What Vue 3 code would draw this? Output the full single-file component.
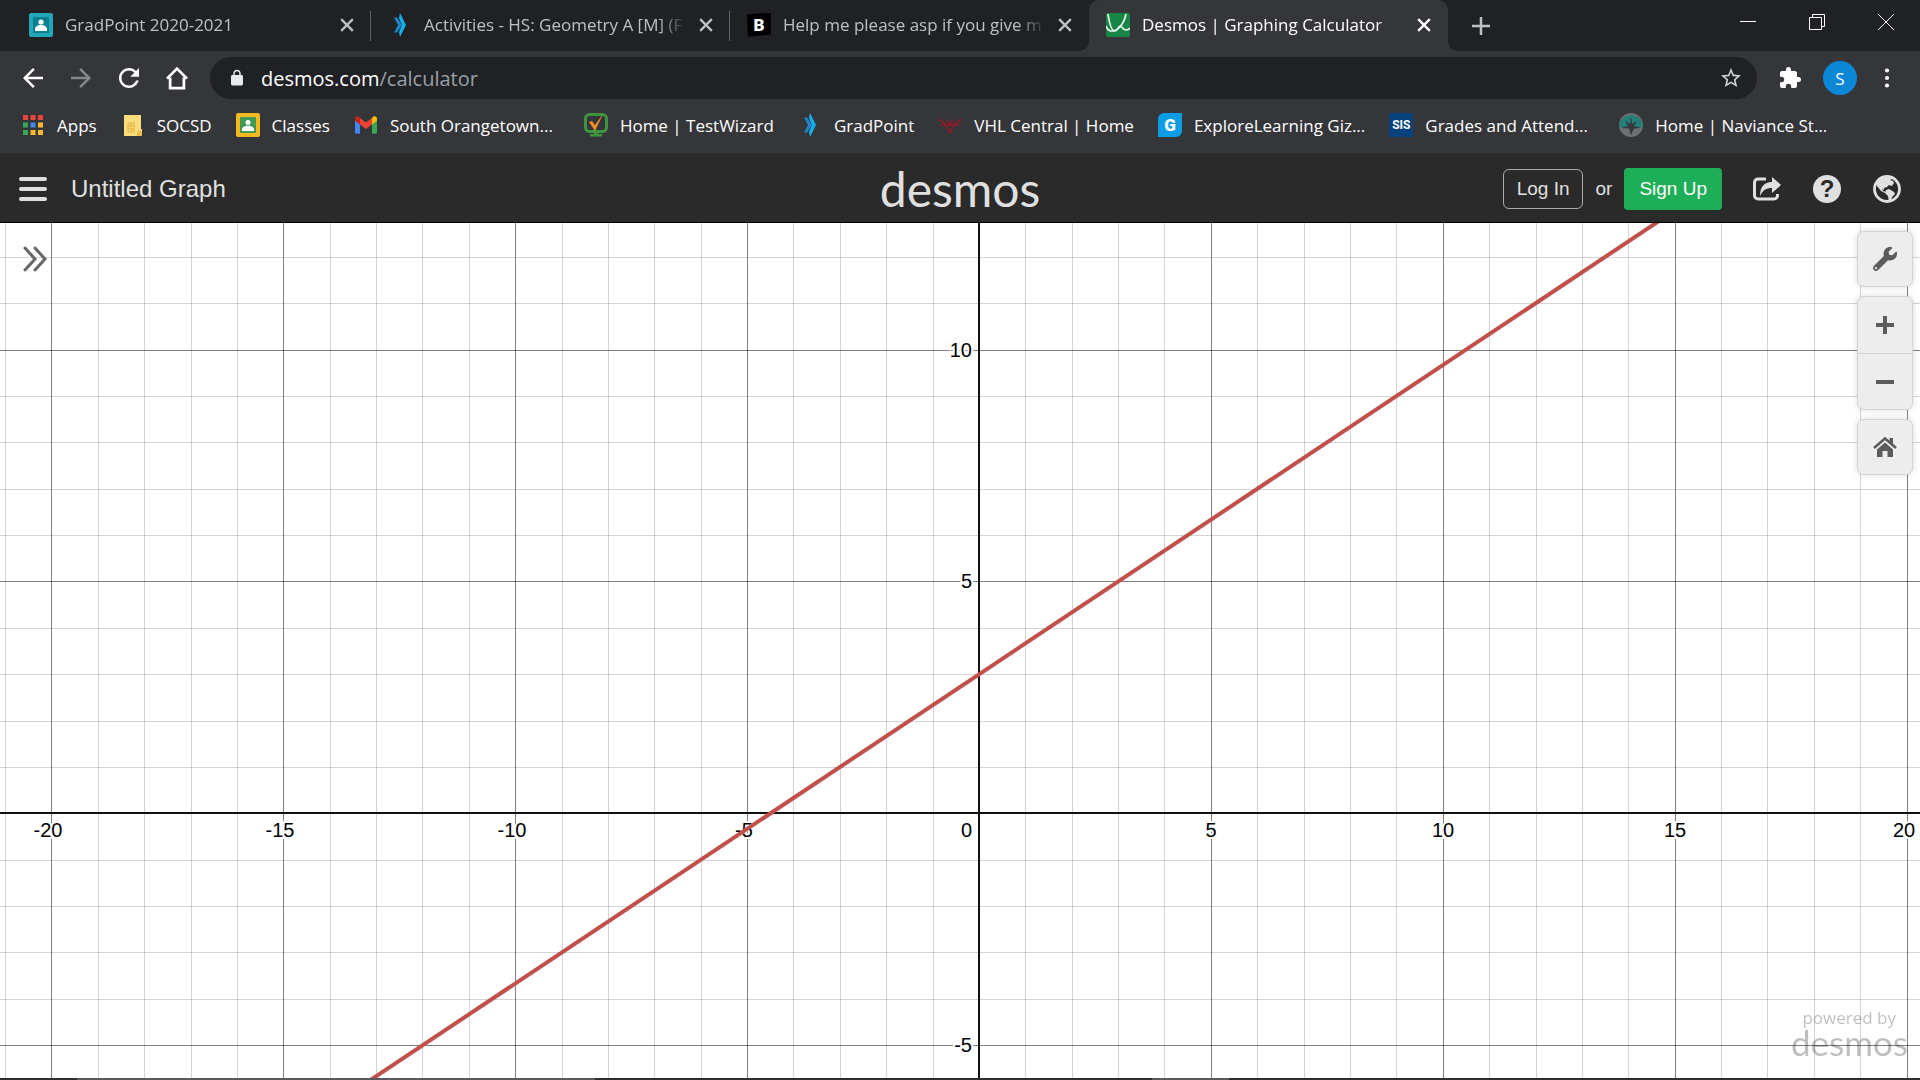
<template>
  <div class="browser">
    <!-- Shared icon shapes -->
    <svg class="sprite" aria-hidden="true">
      <symbol id="classroom-teal" viewBox="0 0 24 24">
        <rect width="24" height="24" rx="2" fill="#22a7b8" />
        <rect x="4" y="4" width="16" height="16" fill="#0b7f8e" />
        <circle cx="12" cy="9" r="2.6" fill="#fff" />
        <path d="M6 18v-2c0-2.500 3-4 6-4s6 1.500 6 4v2z" fill="#fff" />
      </symbol>
      <symbol id="classroom" viewBox="0 0 24 24">
        <rect width="24" height="24" rx="2" fill="#f4b81f" />
        <rect x="4" y="4" width="16" height="16" fill="#3f9b56" />
        <circle cx="12" cy="9.500" r="2.500" fill="#fff" />
        <path d="M6 18v-1.500c0-2.200 3-3.700 6-3.700s6 1.500 6 3.700V18z" fill="#fff" />
      </symbol>
      <symbol id="gradpoint" viewBox="0 0 24 24">
        <path d="M6 4.500h3l5 7.500-5 7.500H6l4-7.500z" fill="#1d86c8" />
        <path d="M12 0l6 12-6 12-1-5 3-7-3-7z" fill="#12b0ee" />
      </symbol>
      <symbol id="desmos" viewBox="0 0 24 24">
        <rect width="24" height="24" rx="2" fill="#168545" />
        <path d="M2 1c1 7 3 17 7 17 3 0 3-5 5-5s3 4 6 4c1.500 0 3-1 4-2M0 13c1 3 3 5 6 5 6 0 12-7 14-17" fill="none" stroke="#e9f7ed" stroke-width="1.700" />
      </symbol>
      <symbol id="apps" viewBox="0 0 24 24">
        <rect x="2" y="2" width="5" height="5" fill="#e8453c" />
        <rect x="9.500" y="2" width="5" height="5" fill="#e8453c" />
        <rect x="17" y="2" width="5" height="5" fill="#e8453c" />
        <rect x="2" y="9.500" width="5" height="5" fill="#3aa757" />
        <rect x="9.500" y="9.500" width="5" height="5" fill="#4688f1" />
        <rect x="17" y="9.500" width="5" height="5" fill="#f9bb2d" />
        <rect x="2" y="17" width="5" height="5" fill="#3aa757" />
        <rect x="9.500" y="17" width="5" height="5" fill="#f9bb2d" />
        <rect x="17" y="17" width="5" height="5" fill="#f9bb2d" />
      </symbol>
      <symbol id="folder" viewBox="0 0 24 24">
        <path d="M3 2h17v14h1v7H3z" fill="#fbdc7c" />
        <path d="M7 10h6v9H7zM10 10v9M7 13h6M7 16h6" fill="none" stroke="#dfb544" />
        <path d="M16 23v-4l2-2 3 2v4z" fill="#e8bd4d" />
      </symbol>
      <symbol id="gmail" viewBox="0 0 24 24">
        <path d="M1 6v13c0 1 .7 1.800 1.700 1.800H6V9z" fill="#4285f4" />
        <path d="M18 9v11.800h3.300c1 0 1.700-.8 1.700-1.800V6z" fill="#34a853" />
        <path d="M18 5v6.500l5-3.800V6c0-2.500-2.500-3.500-4.300-2z" fill="#fbbc04" />
        <path d="M6 11.500V5l6 4.500L18 5v6.500L12 16z" fill="#ea4335" />
        <path d="M1 6v1.700l5 3.800V5L5.300 4C3.500 2.500 1 3.500 1 6z" fill="#c5221f" />
      </symbol>
      <symbol id="testwizard" viewBox="0 0 24 24">
        <rect x="1.500" y="1.500" width="21" height="17" rx="4" fill="none" stroke="#3f9440" stroke-width="3" />
        <path d="M10 18h4v3h4v2.500H6V21h4z" fill="#3f9440" />
        <path d="M5 9l6 9L19 1l-8 11-3-4z" fill="#f28c28" />
      </symbol>
      <symbol id="vhl" viewBox="0 0 24 24">
        <path d="M1 6l7 6 4 8 4-8 7-6M1 12h22M9 7l3 5 3-5M8 12l4 8 4-8" fill="none" stroke="#a51725" stroke-width="1.200" />
      </symbol>
      <symbol id="naviance" viewBox="0 0 24 24">
        <circle cx="12" cy="12" r="12" fill="#6c7073" />
        <path d="M0 14a12 12 0 1 1 24 0c-3 1-5 1-8 0l-4-1-4 1c-3 1-5 1-8 0z" fill="#267e78" />
        <path d="M12 3l1 8 5-3-3 5 7 2-7 .5L12 22l-2-6.500L2 15l7-2-3-5 5 3z" fill="#34383b" />
      </symbol>
      <symbol id="back" viewBox="0 0 24 24">
        <path d="M20 11H7.830l5.590-5.590L12 4l-8 8 8 8 1.410-1.410L7.830 13H20z" fill="currentColor" />
      </symbol>
      <symbol id="forward" viewBox="0 0 24 24">
        <path d="M4 11h12.170l-5.590-5.590L12 4l8 8-8 8-1.410-1.410L16.170 13H4z" fill="currentColor" />
      </symbol>
      <symbol id="reload" viewBox="0 0 24 24">
        <path d="M17.650 6.350C16.200 4.900 14.210 4 12 4c-4.420 0-7.990 3.580-7.990 8s3.570 8 7.990 8c3.730 0 6.840-2.550 7.730-6h-2.080c-.82 2.330-3.040 4-5.650 4-3.310 0-6-2.690-6-6s2.690-6 6-6c1.660 0 3.140.69 4.220 1.780L13 11h7V4l-2.350 2.350z" fill="currentColor" />
      </symbol>
      <symbol id="house" viewBox="0 0 24 24">
        <path d="M4 12.500L12 4.500l8 8M6.500 11.500V20h11v-8.500" fill="none" stroke="currentColor" stroke-width="2.200" />
      </symbol>
      <symbol id="lock" viewBox="0 0 24 24">
        <path d="M18 8h-1V6c0-2.760-2.240-5-5-5S7 3.240 7 6v2H6c-1.100 0-2 .9-2 2v10c0 1.100.9 2 2 2h12c1.100 0 2-.9 2-2V10c0-1.100-.9-2-2-2zM9 6c0-1.660 1.340-3 3-3s3 1.340 3 3v2H9z" fill="currentColor" />
      </symbol>
      <symbol id="star" viewBox="0 0 24 24">
        <path d="M22 9.240l-7.190-.62L12 2 9.190 8.630 2 9.240l5.460 4.730L5.820 21 12 17.270 18.180 21l-1.630-7.030zM12 15.400l-3.760 2.270 1-4.280-3.320-2.880 4.380-.38L12 6.100l1.710 4.040 4.380.38-3.320 2.880 1 4.280z" fill="currentColor" />
      </symbol>
      <symbol id="puzzle" viewBox="0 0 24 24">
        <path d="M20.500 11H19V7c0-1.100-.9-2-2-2h-4V3.500a2.500 2.500 0 0 0-5 0V5H4c-1.100 0-2 .9-2 2v3.800h1.500a2.700 2.700 0 0 1 0 5.400H2V20c0 1.100.9 2 2 2h3.800v-1.500a2.700 2.700 0 0 1 5.400 0V22H17c1.100 0 2-.9 2-2v-4h1.500a2.500 2.500 0 0 0 0-5z" fill="currentColor" />
      </symbol>
      <symbol id="dots" viewBox="0 0 24 24">
        <circle cx="12" cy="3" r="2.500" fill="currentColor" />
        <circle cx="12" cy="12" r="2.500" fill="currentColor" />
        <circle cx="12" cy="21" r="2.500" fill="currentColor" />
      </symbol>
      <symbol id="close" viewBox="0 0 12 12">
        <path d="M1 1l10 10M11 1L1 11" stroke="currentColor" stroke-width="2" />
      </symbol>
      <symbol id="menu" viewBox="0 0 28 24">
        <path d="M2 2h24M2 12h24M2 22h24" stroke="currentColor" stroke-width="4" stroke-linecap="round" />
      </symbol>
      <symbol id="share" viewBox="0 0 28 24">
        <path d="M13 2H5a3.500 3.500 0 0 0-3.500 3.500v13A3.500 3.500 0 0 0 5 22h16a3.500 3.500 0 0 0 3.500-3.500V17" fill="none" stroke="currentColor" stroke-width="3" />
        <path d="M19 0l9 8-9 8v-5c-6 0-9 2-12 8C7 10 11 5 19 5z" fill="currentColor" />
      </symbol>
      <symbol id="globe" viewBox="0 0 28 28">
        <circle cx="14" cy="14" r="12.500" fill="none" stroke="currentColor" stroke-width="2.800" />
        <path d="M3 7l3-4 5-2 4 2 2-1 2 2-2 1 3 1 1 2-2 3-3-1-2 2-3 1v2l-2-1 1 2 3 1-1 1-4-2-4-5-1-4-3 3z" fill="currentColor" />
        <path d="M13 15l3-1 5 3 1 2-3 3-1 4-2 1-1-6-3-3z" fill="currentColor" />
      </symbol>
      <symbol id="wrench" viewBox="0 0 512 512">
        <path d="M507.730 109.100c-2.240-9.030-13.540-12.090-20.120-5.510l-74.360 74.360-67.880-11.310-11.310-67.880 74.360-74.360c6.620-6.620 3.430-17.900-5.660-20.160-47.380-11.740-99.550.91-136.580 37.930-39.640 39.640-50.550 97.100-34.050 147.200L18.740 402.760c-24.990 24.990-24.990 65.510 0 90.500 24.990 24.990 65.510 24.990 90.500 0l213.210-213.210c50.120 16.710 107.470 5.680 147.370-34.220 37.070-37.070 49.700-89.320 37.910-136.730zM64 472c-13.250 0-24-10.750-24-24 0-13.260 10.750-24 24-24s24 10.750 24 24c0 13.250-10.750 24-24 24z" fill="currentColor" />
      </symbol>
      <symbol id="plus" viewBox="0 0 24 24">
        <path d="M12 3v18M3 12h18" stroke="currentColor" stroke-width="4" />
      </symbol>
      <symbol id="minus" viewBox="0 0 24 24">
        <path d="M3 12h18" stroke="currentColor" stroke-width="4" />
      </symbol>
      <symbol id="home" viewBox="0 0 24 24">
        <path d="M1 13L12 3.500 23 13" fill="none" stroke="currentColor" stroke-width="2.500" />
        <path d="M16.500 3H20v7l-3.500-3zM12 7.500l8 7V22h-5.500v-6h-5v6H4v-7.500z" fill="currentColor" />
      </symbol>
      <symbol id="chevrons" viewBox="0 0 24 26">
        <path d="M2 2l10 11L2 24M12 2l10 11-10 11" fill="none" stroke="currentColor" stroke-width="3" stroke-linecap="round" />
      </symbol>
    </svg>

    <!-- Tab strip -->
    <div class="tab-strip">
      <div v-for="tab in tabs" :key="tab.title" class="tab" :class="{ active: tab.active }">
        <span v-if="tab.letter" class="favicon tile" :class="tab.icon">{{ tab.letter }}</span>
        <svg v-else class="favicon"><use :href="'#' + tab.icon" /></svg>
        <span class="tab-title">{{ tab.title }}</span>
        <button class="tab-close" aria-label="Close tab">
          <svg><use href="#close" /></svg>
        </button>
      </div>
      <button class="new-tab" aria-label="New tab">
        <svg viewBox="0 0 18 18"><path d="M9 0v18M0 9h18" stroke="currentColor" stroke-width="2.500" /></svg>
      </button>
      <div class="window-controls">
        <button aria-label="Minimize">
          <svg viewBox="0 0 16 16"><path d="M0 7.500h16" /></svg>
        </button>
        <button aria-label="Restore">
          <svg viewBox="0 0 16 16"><path d="M.5 3.500h12v12H.5zM3.500 3.500v-3h12v12h-3" /></svg>
        </button>
        <button aria-label="Close">
          <svg viewBox="0 0 16 16"><path d="M0 0l16 16M16 0L0 16" /></svg>
        </button>
      </div>
    </div>

    <!-- Address bar -->
    <div class="toolbar">
      <button class="tool" aria-label="Back"><svg><use href="#back" /></svg></button>
      <button class="tool disabled" aria-label="Forward"><svg><use href="#forward" /></svg></button>
      <button class="tool" aria-label="Reload"><svg><use href="#reload" /></svg></button>
      <button class="tool" aria-label="Home"><svg><use href="#house" /></svg></button>
      <div class="omnibox">
        <svg class="lock"><use href="#lock" /></svg>
        <a class="url" href="#">desmos.com<span>/calculator</span></a>
        <button class="bookmark-star" aria-label="Bookmark this page"><svg><use href="#star" /></svg></button>
      </div>
      <button class="tool extensions" aria-label="Extensions"><svg><use href="#puzzle" /></svg></button>
      <button class="avatar">S</button>
      <button class="more" aria-label="More"><svg><use href="#dots" /></svg></button>
    </div>

    <!-- Bookmarks -->
    <nav class="bookmarks">
      <a v-for="bookmark in bookmarks" :key="bookmark.label" href="#">
        <span v-if="bookmark.letter" class="favicon tile" :class="bookmark.icon">{{ bookmark.letter }}</span>
        <svg v-else class="favicon"><use :href="'#' + bookmark.icon" /></svg>
        <span :class="{ truncated: bookmark.label.endsWith('...') }">{{ bookmark.label }}</span>
      </a>
    </nav>

    <!-- Calculator header -->
    <header class="app-header">
      <div class="header-left">
        <button class="icon-button" aria-label="Open menu"><svg class="menu"><use href="#menu" /></svg></button>
        <h1>Untitled Graph</h1>
      </div>
      <div class="brand">desmos</div>
      <div class="header-right">
        <button class="login">Log In</button>
        <span>or</span>
        <button class="signup">Sign Up</button>
        <button class="icon-button share" aria-label="Share"><svg><use href="#share" /></svg></button>
        <button class="help" aria-label="Help">?</button>
        <button class="icon-button globe" aria-label="Language"><svg><use href="#globe" /></svg></button>
      </div>
    </header>

    <!-- Graph paper -->
    <main ref="paper" class="paper">
      <svg class="plot" :width="width" :height="height">
        <g class="minor">
          <line v-for="x in minorX" :key="'x' + x" :x1="toX(x)" :x2="toX(x)" y1="0" :y2="height" />
          <line v-for="y in minorY" :key="'y' + y" x1="0" :x2="width" :y1="toY(y)" :y2="toY(y)" />
        </g>
        <g class="major">
          <line v-for="x in majorX" :key="'x' + x" :x1="toX(x)" :x2="toX(x)" y1="0" :y2="height" />
          <line v-for="y in majorY" :key="'y' + y" x1="0" :x2="width" :y1="toY(y)" :y2="toY(y)" />
        </g>
        <g class="axis">
          <line :x1="toX(0)" :x2="toX(0)" y1="0" :y2="height" />
          <line x1="0" :x2="width" :y1="toY(0)" :y2="toY(0)" />
        </g>
        <g class="labels">
          <text v-for="x in majorX" :key="'x' + x" :x="labelX(x)" :y="toY(0) + 24" text-anchor="middle">{{ x }}</text>
          <text :x="toX(0) - 7" :y="toY(0) + 24" text-anchor="end">0</text>
          <text v-for="y in majorY" :key="'y' + y" :x="toX(0) - 7" :y="toY(y) + 7" text-anchor="end">{{ y }}</text>
        </g>
        <line class="curve" :x1="toX(xMin)" :y1="toY(f(xMin))" :x2="toX(xMax)" :y2="toY(f(xMax))" />
      </svg>

      <button class="expand" aria-label="Show expression list"><svg><use href="#chevrons" /></svg></button>

      <div class="graph-controls">
        <div class="control-group">
          <button aria-label="Graph settings"><svg><use href="#wrench" /></svg></button>
        </div>
        <div class="control-group zoom">
          <button aria-label="Zoom in"><svg><use href="#plus" /></svg></button>
          <button aria-label="Zoom out"><svg><use href="#minus" /></svg></button>
        </div>
        <div class="control-group">
          <button aria-label="Default viewport"><svg><use href="#home" /></svg></button>
        </div>
      </div>

      <div class="powered-by">
        <span>powered by</span>
        <strong>desmos</strong>
      </div>
    </main>

    <div class="taskbar">
      <span class="gap-start"></span>
      <span class="open"></span>
      <span class="gap-middle"></span>
      <span class="open short"></span>
    </div>
  </div>
</template>

<script setup>
import { computed, onBeforeUnmount, onMounted, ref } from 'vue';

const tabs = [
  { title: 'GradPoint 2020-2021', icon: 'classroom-teal' },
  { title: 'Activities - HS: Geometry A [M] (F', icon: 'gradpoint' },
  { title: 'Help me please asp if you give m', icon: 'brainly', letter: 'B' },
  { title: 'Desmos | Graphing Calculator', icon: 'desmos', active: true }
];

const bookmarks = [
  { label: 'Apps', icon: 'apps' },
  { label: 'SOCSD', icon: 'folder' },
  { label: 'Classes', icon: 'classroom' },
  { label: 'South Orangetown...', icon: 'gmail' },
  { label: 'Home | TestWizard', icon: 'testwizard' },
  { label: 'GradPoint', icon: 'gradpoint' },
  { label: 'VHL Central | Home', icon: 'vhl' },
  { label: 'ExploreLearning Giz...', icon: 'gizmos', letter: 'G' },
  { label: 'Grades and Attend...', icon: 'sis', letter: 'SIS' },
  { label: 'Home | Naviance St...', icon: 'naviance' }
];

// Graph viewport
const paper = ref(null);
const width = ref(1920);
const height = ref(855);
const xMin = -21.12;
const xMax = 20.28;
const originRatio = 0.691;

const unit = computed(() => width.value / (xMax - xMin));
const yMax = computed(() => (height.value * originRatio) / unit.value);
const yMin = computed(() => yMax.value - height.value / unit.value);

const toX = (x) => Math.floor((x - xMin) * unit.value);
const toY = (y) => Math.floor((yMax.value - y) * unit.value);

const f = (x) => (2 / 3) * x + 3;

// Grid values between two bounds, without the axis itself
const steps = (min, max, step) => {
  const values = [];
  for (let v = Math.ceil(min / step) * step; v <= max; v += step) {
    if (v !== 0) values.push(v);
  }
  return values;
};

const minorX = computed(() => steps(xMin, xMax, 1).filter((v) => v % 5));
const minorY = computed(() => steps(yMin.value, yMax.value, 1).filter((v) => v % 5));
const majorX = computed(() => steps(xMin, xMax, 5));
const majorY = computed(() => steps(yMin.value, yMax.value, 5));

// Negative labels shift left by half a minus sign, and none leave the paper
const labelX = (x) => Math.min(toX(x) - (x < 0 ? 3 : 0), width.value - 16);

let observer;
onMounted(() => {
  observer = new ResizeObserver(() => {
    width.value = paper.value.clientWidth;
    height.value = paper.value.clientHeight;
  });
  observer.observe(paper.value);
});
onBeforeUnmount(() => observer.disconnect());
</script>

<style>
body {
  margin: 0;
  overflow: hidden;
}
</style>

<style scoped>
.browser {
  display: flex;
  flex-direction: column;
  height: 100vh;
  font-family: 'Open Sans', 'Noto Sans', sans-serif;
  font-size: 17px;
  color: #fff;
  background: #35363a;
}

.sprite {
  position: absolute;
  width: 0;
  height: 0;
}

button {
  display: flex;
  align-items: center;
  justify-content: center;
  flex-shrink: 0;
  padding: 0;
  border: 0;
  background: none;
  color: inherit;
  font: inherit;
  cursor: pointer;
}

a {
  color: inherit;
  text-decoration: none;
}

.favicon {
  flex-shrink: 0;
  width: 24px;
  height: 24px;
}

.tile {
  font: 900 17px/24px 'Roboto', sans-serif;
  text-align: center;
  color: #fff;
}

.tile.brainly {
  background: #000;
  clip-path: polygon(0 8%, 100% 0, 100% 92%, 4% 100%);
}

.tile.gizmos {
  border-radius: 6px 0;
  background: #0d9de4;
}

.tile.sis {
  border-radius: 1px;
  background: #08417f;
  font-size: 12px;
  font-weight: 700;
}

/* Tabs */
.tab-strip {
  display: flex;
  height: 51px;
  padding-left: 12px;
  background: #202124;
}

.tab {
  position: relative;
  display: flex;
  align-items: center;
  gap: 12px;
  box-sizing: border-box;
  flex: 0 1 359px;
  min-width: 0;
  padding: 0 17px 2px;
  color: #bdc1c6;
}

.tab:nth-child(-n + 2)::after {
  content: '';
  position: absolute;
  right: 0;
  top: 11px;
  width: 1px;
  height: 30px;
  background: #5f6368;
}

.tab.active {
  border-radius: 10px 10px 0 0;
  background: #35363a;
  color: #fff;
}

.tab.active::before,
.tab.active::after {
  content: '';
  position: absolute;
  bottom: 0;
  width: 10px;
  height: 10px;
}

.tab.active::before {
  left: -10px;
  background: radial-gradient(circle at 0 0, #202124 10px, #35363a 10px);
}

.tab.active::after {
  right: -10px;
  background: radial-gradient(circle at 100% 0, #202124 10px, #35363a 10px);
}

.tab-title {
  flex: 1;
  overflow: hidden;
  white-space: nowrap;
  -webkit-mask-image: linear-gradient(to right, #000 calc(100% - 30px), transparent);
  mask-image: linear-gradient(to right, #000 calc(100% - 30px), transparent);
}

.tab-close svg {
  width: 14px;
  height: 14px;
}

.new-tab {
  width: 66px;
  color: #bdc1c6;
}

.new-tab svg {
  width: 18px;
  height: 18px;
}

.window-controls {
  display: flex;
  height: 43px;
  margin-left: auto;
}

.window-controls button {
  width: 69px;
}

.window-controls svg {
  width: 16px;
  height: 16px;
  fill: none;
  stroke: #fff;
}

/* Toolbar */
.toolbar {
  display: flex;
  align-items: center;
  gap: 18px;
  height: 54px;
  padding: 0 21px 0 18px;
}

.tool,
.tool svg {
  width: 30px;
  height: 30px;
}

.tool.disabled {
  color: #85878a;
}

.tool.extensions svg {
  width: 24px;
  height: 24px;
}

.omnibox {
  display: flex;
  align-items: center;
  flex: 1;
  gap: 15px;
  height: 42px;
  padding: 0 14px 0 18px;
  border-radius: 21px;
  background: #202124;
}

.lock {
  width: 18px;
  height: 18px;
  color: #e8eaed;
}

.url {
  flex: 1;
  font-size: 20px;
}

.url span {
  color: #9aa0a6;
}

.bookmark-star,
.bookmark-star svg {
  width: 24px;
  height: 24px;
  color: #d0d2d5;
}

.avatar {
  width: 34px;
  height: 34px;
  border-radius: 50%;
  background: #0a88d6;
}

.more,
.more svg {
  width: 24px;
  height: 20px;
}

/* Bookmarks */
.bookmarks {
  display: flex;
  align-items: center;
  gap: 24px;
  height: 40px;
  padding: 0 0 8px 21px;
  overflow: hidden;
}

.bookmarks a {
  display: flex;
  align-items: center;
  flex-shrink: 0;
  gap: 12px;
  white-space: nowrap;
}

.truncated {
  min-width: 170px;
}

/* Calculator header */
.app-header {
  display: grid;
  grid-template-columns: 1fr auto 1fr;
  align-items: center;
  box-sizing: border-box;
  height: 70px;
  padding: 2px 19px 0;
  border-bottom: 1px solid #000;
  background: #2a2a2a;
  color: #e0e0e0;
  font-family: 'Liberation Sans', Arial, sans-serif;
  font-size: 19px;
}

.header-left,
.header-right {
  display: flex;
  align-items: center;
}

.header-left {
  gap: 24px;
}

.header-right {
  justify-content: flex-end;
}

.menu {
  width: 28px;
  height: 24px;
}

h1 {
  margin: 0;
  font-size: 24px;
  font-weight: 400;
}

.brand {
  font-family: 'Lato', sans-serif;
  font-size: 48px;
  line-height: 60px;
}

.login {
  height: 40px;
  margin-right: 12px;
  padding: 0 13px;
  border: 1px solid #aaa;
  border-radius: 6px;
}

.signup {
  height: 42px;
  margin: 0 31px 0 12px;
  padding: 0 15px;
  border-radius: 4px;
  background: #1fae58;
  color: #fff;
}

.share svg {
  width: 28px;
  height: 24px;
}

.help {
  width: 28px;
  height: 28px;
  margin: 0 32px;
  border-radius: 50%;
  background: #e0e0e0;
  color: #2a2a2a;
  font-size: 24px;
  font-weight: 700;
}

.globe svg {
  width: 28px;
  height: 28px;
}

/* Graph */
.paper {
  position: relative;
  flex: 1;
  min-height: 0;
  overflow: hidden;
  background: #fff;
}

.plot {
  display: block;
}

.minor line {
  stroke: #000;
  stroke-opacity: 0.17;
  shape-rendering: crispEdges;
}

.major line {
  stroke: #000;
  stroke-opacity: 0.5;
  shape-rendering: crispEdges;
}

.axis line {
  stroke: #111;
  stroke-width: 2;
  shape-rendering: crispEdges;
}

.labels text {
  font: 20px 'Liberation Sans', Arial, sans-serif;
  fill: #000;
  stroke: #fff;
  stroke-width: 4px;
  paint-order: stroke;
}

.curve {
  stroke: #c1504c;
  stroke-width: 4;
}

.expand {
  position: absolute;
  top: 23px;
  left: 23px;
  color: #666;
}

.expand svg {
  width: 24px;
  height: 26px;
}

.graph-controls {
  position: absolute;
  top: 8px;
  right: 7px;
  display: flex;
  flex-direction: column;
  gap: 9px;
}

.control-group {
  border: 1px solid #d4d4d4;
  border-radius: 7px;
  background: #ededed;
  box-shadow: 0 0 6px rgba(0, 0, 0, 0.15);
  color: #5c5c5c;
}

.control-group button {
  width: 54px;
  height: 54px;
}

.control-group.zoom button {
  height: 56px;
}

.control-group button + button {
  border-top: 1px solid #d4d4d4;
}

.control-group svg {
  width: 24px;
  height: 24px;
}

.powered-by {
  position: absolute;
  right: 12px;
  bottom: 20px;
  display: flex;
  flex-direction: column;
  align-items: flex-end;
  color: #000;
  opacity: 0.25;
  line-height: 16px;
}

.powered-by span {
  padding-right: 12px;
}

.powered-by strong {
  font-family: 'Lato', sans-serif;
  font-size: 35px;
  font-weight: 400;
  line-height: 32px;
}

.taskbar {
  display: flex;
  height: 2px;
  background: #2e2e30;
}

.gap-start {
  flex: 0 0 4%;
}

.gap-middle {
  flex: 0 0 29%;
}

.open {
  flex: 0 0 27%;
  background: #58595b;
}

.open.short {
  flex-basis: 4%;
}
</style>
